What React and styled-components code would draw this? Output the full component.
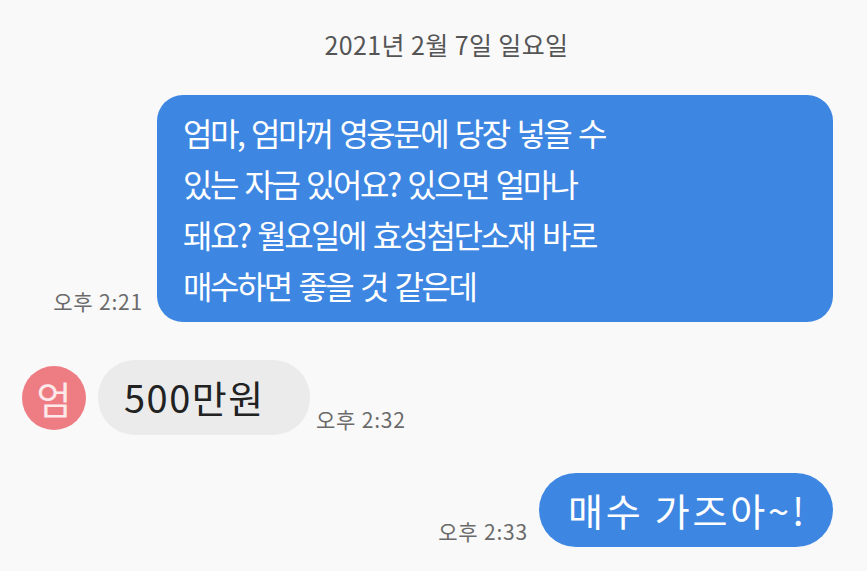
import React from "react";
import styled, { createGlobalStyle } from "styled-components";

const Global = createGlobalStyle`
  html, body { margin: 0; padding: 0; background: #f9f9f9; }
  body { font-family: "Noto Sans CJK KR", "Noto Sans", Roboto, sans-serif; }
`;

const Page = styled.div`
  width: 867px;
  height: 571px;
  overflow: hidden;
  display: flex;
  flex-direction: column;
  background: #f9f9f9;
`;

const DateLabel = styled.div`
  margin-top: 28px;
  height: 32px;
  line-height: 32px;
  text-align: center;
  font-size: 25px;
  letter-spacing: 0.4px;
  color: #555555;
  padding-left: 26px;
`;

const Row = styled.div`
  display: flex;
  align-items: flex-end;
  justify-content: ${(p) => (p.$out ? "flex-end" : "flex-start")};
  margin-top: ${(p) => p.$top}px;
  padding: ${(p) => (p.$out ? "0 34px 0 0" : "0 0 0 22px")};
`;

const Time = styled.span`
  font-size: 21px;
  color: #6a6a6a;
  line-height: 24px;
  letter-spacing: 0.8px;
  white-space: nowrap;
  margin: ${(p) => p.$m};
`;

const Bubble = styled.div`
  display: flex;
  align-items: center;
  background: ${(p) => (p.$out ? "#3d86e2" : "#ebebeb")};
  color: ${(p) => (p.$out ? "#ffffff" : "#222222")};
  border-radius: ${(p) => p.$r}px;
  font-size: ${(p) => p.$fs}px;
  letter-spacing: ${(p) => p.$ls}px;
  word-spacing: ${(p) => p.$ws || 0}px;
  line-height: 51px;
  padding: ${(p) => p.$pad};
  white-space: pre-line;
  box-sizing: border-box;
  width: ${(p) => p.$w}px;
  height: ${(p) => p.$h}px;
`;

const Avatar = styled.div`
  width: 64px;
  height: 64px;
  border-radius: 50%;
  background: #ee7d83;
  color: #fde8ea;
  font-size: 38px;
  line-height: 1;
  display: flex;
  align-items: center;
  justify-content: center;
  align-self: center;
  margin-right: 12px;
`;

export default function App() {
  return (
    <Page>
      <Global />
      <DateLabel>2021년 2월 7일 일요일</DateLabel>
      <Row $out $top={35}>
        <Time $m="0 14px 9px 0">오후 2:21</Time>
        <Bubble $out $r={26} $w={676} $h={227} $fs={32} $ls={-2.5} $ws={3} $pad="11px 20px 11px 26px">
          {"엄마, 엄마꺼 영웅문에 당장 넣을 수\n있는 자금 있어요? 있으면 얼마나\n돼요? 월요일에 효성첨단소재 바로\n매수하면 좋을 것 같은데"}
        </Bubble>
      </Row>
      <Row $top={38}>
        <Avatar>엄</Avatar>
        <Bubble $r={37} $w={212} $h={75} $fs={38} $ls={1.5} $pad="0 0 2px 26px">
          500만원
        </Bubble>
        <Time $m="0 0 4px 6px">오후 2:32</Time>
      </Row>
      <Row $out $top={38}>
        <Time $m="0 11px 4px 0">오후 2:33</Time>
        <Bubble $out $r={37} $w={294} $h={74} $fs={38} $ls={2.8} $ws={0} $pad="0 0 2px 29px">
          매수 가즈아~!
        </Bubble>
      </Row>
    </Page>
  );
}
